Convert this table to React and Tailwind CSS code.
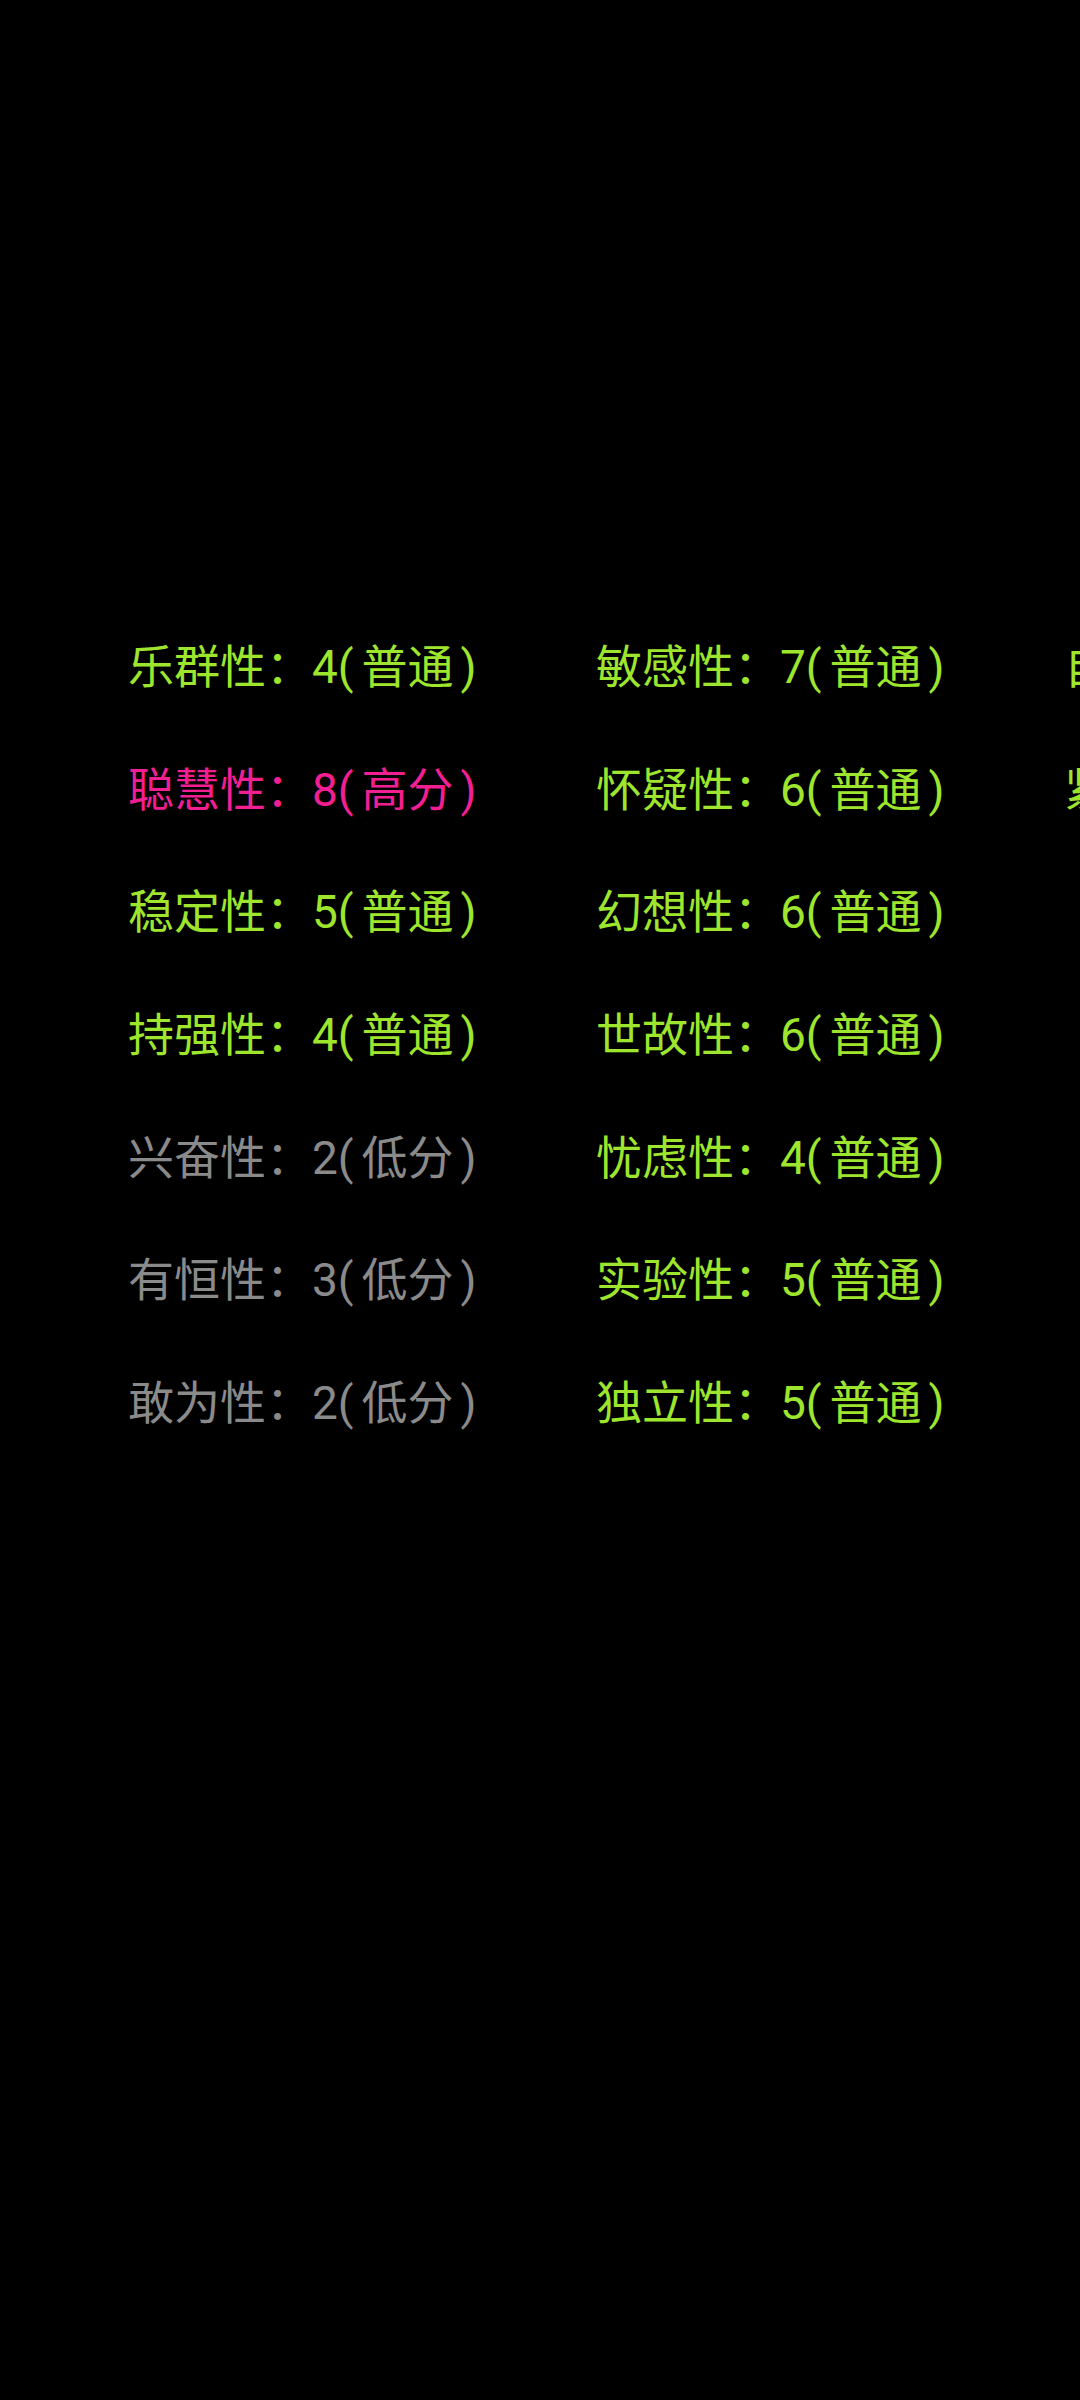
const COLS = [
  [
    ["乐群性", 4],
    ["聪慧性", 8],
    ["稳定性", 5],
    ["持强性", 4],
    ["兴奋性", 2],
    ["有恒性", 3],
    ["敢为性", 2],
  ],
  [
    ["敏感性", 7],
    ["怀疑性", 6],
    ["幻想性", 6],
    ["世故性", 6],
    ["忧虑性", 4],
    ["实验性", 5],
    ["独立性", 5],
  ],
  [
    ["自律性", 5],
    ["紧张性", 5],
  ],
];

function level(score) {
  if (score >= 8) return { label: "高分", cls: "text-[#f21f93]" };
  if (score <= 3) return { label: "低分", cls: "text-[#8a8a8a]" };
  return { label: "普通", cls: "text-[#9ee52d]" };
}

function Factor({ name, score }) {
  const lv = level(score);
  return (
    <div className={"h-[122.7px] flex items-center whitespace-nowrap " + lv.cls}>
      <span>{name}：{score}</span>
      <span className="mr-[8px]">(</span>
      <span>{lv.label}</span>
      <span className="ml-[7px]">)</span>
    </div>
  );
}

export default function App() {
  return (
    <div
      className="w-[1080px] h-[2400px] bg-black overflow-hidden text-[46px]"
      style={{ fontFamily: 'Roboto, "Noto Sans CJK SC", sans-serif' }}
    >
      <div className="flex pt-[606px] pl-[128px]">
        {COLS.map((col, i) => (
          <div key={i} className="w-[468px] shrink-0 flex flex-col">
            {col.map(([name, score]) => (
              <Factor key={name} name={name} score={score} />
            ))}
          </div>
        ))}
      </div>
    </div>
  );
}
